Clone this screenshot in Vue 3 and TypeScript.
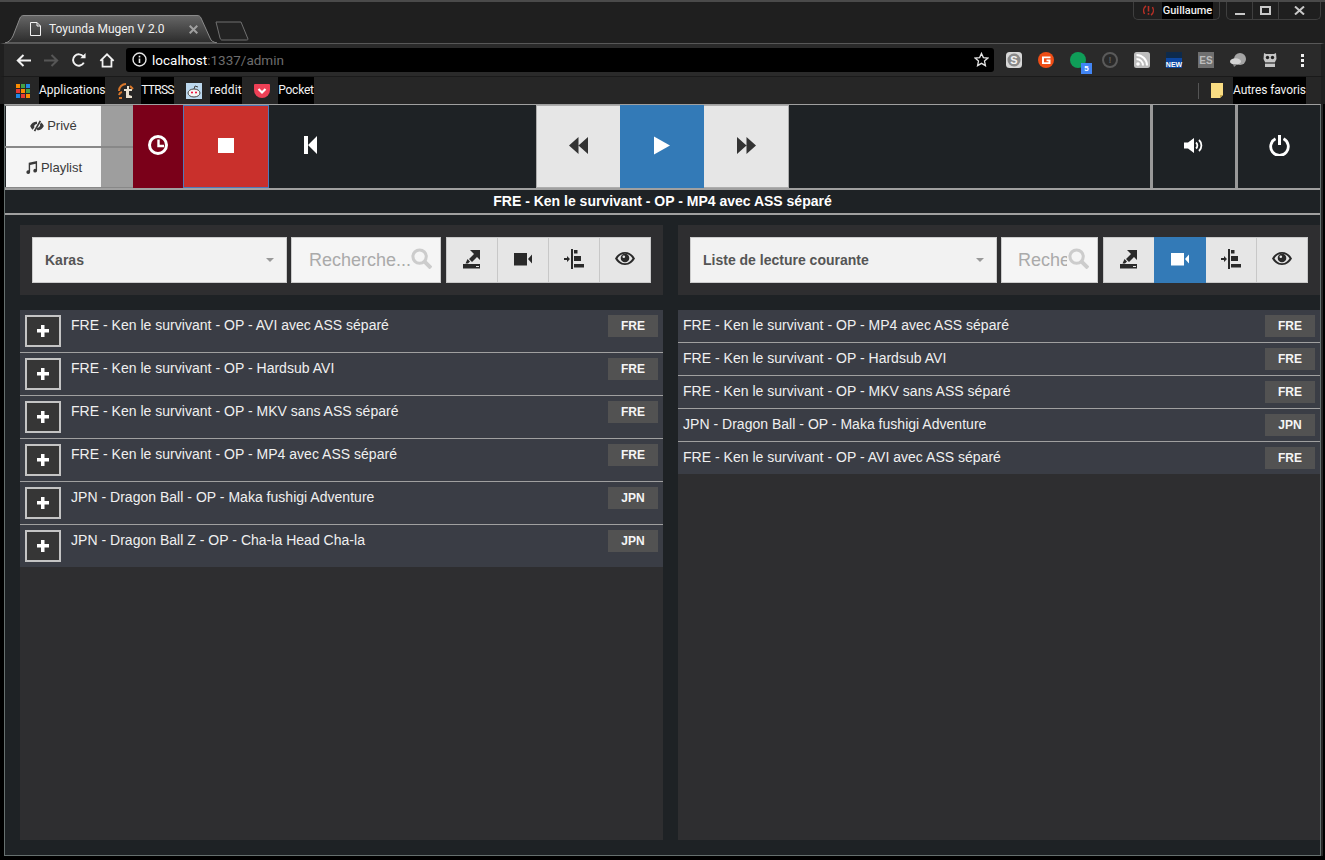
<script setup lang="ts">
const leftRows = [
  { t: 'FRE - Ken le survivant - OP - AVI avec ASS séparé', l: 'FRE' },
  { t: 'FRE - Ken le survivant - OP - Hardsub AVI', l: 'FRE' },
  { t: 'FRE - Ken le survivant - OP - MKV sans ASS séparé', l: 'FRE' },
  { t: 'FRE - Ken le survivant - OP - MP4 avec ASS séparé', l: 'FRE' },
  { t: 'JPN - Dragon Ball - OP - Maka fushigi Adventure', l: 'JPN' },
  { t: 'JPN - Dragon Ball Z - OP - Cha-la Head Cha-la', l: 'JPN' },
]
const rightRows = [
  { t: 'FRE - Ken le survivant - OP - MP4 avec ASS séparé', l: 'FRE' },
  { t: 'FRE - Ken le survivant - OP - Hardsub AVI', l: 'FRE' },
  { t: 'FRE - Ken le survivant - OP - MKV sans ASS séparé', l: 'FRE' },
  { t: 'JPN - Dragon Ball - OP - Maka fushigi Adventure', l: 'JPN' },
  { t: 'FRE - Ken le survivant - OP - AVI avec ASS séparé', l: 'FRE' },
]
const tools = ['i-export', 'i-video', 'i-align', 'i-eye']
const dots = ['#e53935', '#fb8c00', '#43a047', '#1e88e5']
</script>

<template>
  <div class="win">
    <svg class="sprite" aria-hidden="true">
      <symbol id="i-export" viewBox="0 0 20 20">
        <path d="M8 1h10v10l-3-3-5 5-3-3 5-5zM5.500 10l2.500 2.500L6 14.500H3.500zM1 15h17v4.500H1z" fill="currentColor" />
        <path d="M14 17h3v1h-3z" fill="#e6e6e6" />
      </symbol>
      <symbol id="i-video" viewBox="0 0 20 20">
        <path d="M1 4h13v12.500H1zM15 10l4-4.500v9z" fill="currentColor" />
      </symbol>
      <symbol id="i-align" viewBox="0 0 20 20">
        <path d="M7 0h2v20H7zM0 9h3V7l3 3-3 3v-2H0zM10 1h3.500v3.500H10zM10 7h7v5h-7zM10 15h10v3.500H10z" fill="currentColor" />
      </symbol>
      <symbol id="i-eye" viewBox="0 0 20 20">
        <path fill-rule="evenodd" d="M10 3c5 0 8 3 10 6.500-2 3.500-5 6.500-10 6.500S2 13 0 9.500C2 6 5 3 10 3zM2.500 9.500c1.500 2.500 4 4.800 7.500 4.800s6-2.300 7.500-4.800C16 7 13.500 4.700 10 4.700S4 7 2.500 9.500z" fill="currentColor" />
        <circle cx="10" cy="9" r="4.300" fill="currentColor" />
        <circle cx="8.800" cy="7.800" r="1.300" fill="#e6e6e6" />
      </symbol>
      <symbol id="i-search" viewBox="0 0 22 22">
        <circle cx="9" cy="9" r="7" fill="none" stroke="currentColor" stroke-width="3.200" />
        <path d="M14 14l7 7" stroke="currentColor" stroke-width="4.200" />
      </symbol>
    </svg>

    <div class="tabstrip">
      <div class="tab">
        <svg class="tabshape" viewBox="0 0 212 28" preserveAspectRatio="none">
          <defs>
            <linearGradient id="tg" x1="0" y1="0" x2="0" y2="1">
              <stop offset="0" stop-color="#666" />
              <stop offset="1" stop-color="#2b2b2b" />
            </linearGradient>
          </defs>
          <path d="M0 28C4 27 6 25 8 21L15 3C16 1 17 .5 19 .5H192C194 .5 195 1 196 3L205 23C206 26 208 27 212 28Z" fill="url(#tg)" stroke="#8a8a8a" />
        </svg>
        <svg class="favicon" viewBox="0 0 11 14">
          <path d="M.5.500h6.500l3.500 3.500v9.500H.5zM7 .5v3.500h3.500" fill="none" stroke="#f2f2f2" />
        </svg>
        <span class="tabtitle">Toyunda Mugen V 2.0</span>
        <svg class="tabx" width="9" height="9" viewBox="0 0 9 9"><path d="M.7.7l7.600 7.600M8.300.7L.7 8.300" stroke="#a0a0a0" stroke-width="2" /></svg>
      </div>
      <svg class="newtab" viewBox="0 0 36 20">
        <path d="M2 1H27L34 18C34 19 33 19 32 19H8C7 19 7 19 6 17Z" fill="#232323" stroke="#707070" />
      </svg>
      <div class="spacer"></div>
      <div class="userpill">
        <svg class="usericon" width="13" height="11" viewBox="0 0 13 11">
          <path d="M4 1C1.500 2.500 1 6 2.500 9M9 10c2.500-1.500 3-5 1.500-8" fill="none" stroke="#b93026" stroke-width="1.500" />
          <path d="M5.700 1h1.600v5.500H5.700zM5.700 8h1.600v1.700H5.700z" fill="#b93026" />
        </svg>
        <span class="username">Guillaume</span>
      </div>
      <div class="wincontrols">
        <span class="wc"><i class="wmin"></i></span>
        <span class="wc"><i class="wmax"></i></span>
        <span class="wc wide">
          <svg width="11" height="9" viewBox="0 0 11 9"><path d="M1 .5l9 8M10 .5l-9 8" stroke="#c8c8c8" stroke-width="2" /></svg>
        </span>
      </div>
    </div>

    <div class="toolbar">
      <svg class="nav" width="15" height="13" viewBox="0 0 15 13"><path d="M7.500 1L1.800 6.500 7.500 12M2 6.500h13" fill="none" stroke="#f2f2f2" stroke-width="2" /></svg>
      <svg class="nav" width="15" height="13" viewBox="0 0 15 13"><path d="M7.500 1l5.700 5.500L7.500 12M13 6.500H0" fill="none" stroke="#565656" stroke-width="2" /></svg>
      <svg class="nav" width="14" height="14" viewBox="0 0 16 16"><path d="M13.500 11A6.500 6.500 0 1 1 13 4.200" fill="none" stroke="#f2f2f2" stroke-width="2.200" /><path d="M9.500 6H15.500V0z" fill="#f2f2f2" /></svg>
      <svg class="nav navlast" width="16" height="15" viewBox="0 0 18 16"><path d="M1.500 8.500L9 1l7.500 7.500M4 7v8h10V7" fill="none" stroke="#f2f2f2" stroke-width="2" /></svg>
      <div class="omni">
        <svg width="15" height="15" viewBox="0 0 15 15"><circle cx="7.500" cy="7.500" r="6.500" fill="none" stroke="#e6e6e6" stroke-width="1.400" /><path d="M6.700 6.500h1.600v4.500H6.700zM6.700 3.800h1.600v1.600H6.700z" fill="#e6e6e6" /></svg>
        <span class="url"><b>localhost</b>:1337/admin</span>
        <span class="spacer"></span>
        <svg width="15" height="15" viewBox="0 0 16 16"><path d="M8 1.500l2 4.500 4.800.5-3.600 3.200 1 4.800L8 12.100l-4.200 2.400 1-4.800L1.200 6.500 6 6z" fill="none" stroke="#e6e6e6" stroke-width="1.400" /></svg>
      </div>
      <div class="exts">
        <svg class="ext" viewBox="0 0 16 16"><rect width="16" height="16" rx="3.500" fill="#d8d8d8" /><circle cx="8" cy="8" r="6.500" fill="#8a8a8a" /><text x="8" y="11.800" font-size="11" font-weight="700" text-anchor="middle" fill="#f4f4f4" font-family="Liberation Sans">S</text></svg>
        <svg class="ext" viewBox="0 0 16 16"><circle cx="8" cy="8" r="8" fill="#ef4e16" /><path d="M12.500 4.500H4v7.500h8.500V7.500H8.500v1.800h2v1H6V6.300h6.500z" fill="#fff" /></svg>
        <span class="ext e-dot"><i>5</i></span>
        <span class="ext e-info">!</span>
        <svg class="ext" viewBox="0 0 16 16"><rect width="16" height="16" rx="2.500" fill="#bdbdbd" /><circle cx="4" cy="12" r="1.800" fill="#fff" /><path d="M2.500 7a6.500 6.500 0 0 1 6.500 6.500M2.500 3a10.500 10.500 0 0 1 10.500 10.500" fill="none" stroke="#fff" stroke-width="2" /></svg>
        <span class="ext e-new">NEW</span>
        <span class="ext e-es">ES</span>
        <svg class="ext" viewBox="0 0 16 16"><circle cx="10" cy="7" r="6" fill="#a4a4a4" /><ellipse cx="5.500" cy="9.500" rx="5.500" ry="3.200" fill="#d4d4d4" /><path d="M3 12l1 3 3-2.500z" fill="#8a8a8a" /></svg>
        <svg class="ext" viewBox="0 0 16 16"><path d="M2 1l2 1h8l2-1 .5 6-1.500 3v5H3v-5L1.500 7z" fill="#c6c6c6" /><circle cx="5.500" cy="5.500" r="1.700" fill="#222" /><circle cx="10.500" cy="5.500" r="1.700" fill="#222" /><path d="M3 10h10v2H3z" fill="#666" /></svg>
      </div>
      <span class="kebab"><i></i><i></i><i></i></span>
    </div>

    <div class="bookmarks">
      <span class="apps"><i v-for="n in 9" :key="n" :style="{ background: dots[n % 4] }"></i></span>
      <span class="bm b-app">Applications</span>
      <svg class="bmicon" viewBox="0 0 16 16"><path d="M1 8a7 7 0 0 1 7-7M1 12a4 4 0 0 1 3-3" fill="none" stroke="#d9772a" stroke-width="2" /><path d="M9 3h2v3h3v2h-3v4l3 1v2H8V8H6V6h3z" fill="#e9e0d0" /><path d="M12 3l3 3M1 15h3" stroke="#d9772a" stroke-width="2" /></svg>
      <span class="bm b-tt">TTRSS</span>
      <svg class="bmicon" viewBox="0 0 16 16"><rect width="16" height="16" fill="#bcd8ee" /><ellipse cx="8" cy="10" rx="6" ry="4" fill="#f4f4f4" stroke="#444" /><circle cx="6" cy="9.500" r="1" fill="#e03" /><circle cx="10" cy="9.500" r="1" fill="#e03" /><path d="M8 6l1-3 3 1" fill="none" stroke="#444" /></svg>
      <span class="bm b-re">reddit</span>
      <svg class="bmicon" viewBox="0 0 16 16"><path d="M1 1h14a1 1 0 0 1 1 1v5a8 8 0 0 1-16 0V2a1 1 0 0 1 1-1z" fill="#ee4056" /><path d="M4.500 6L8 9.500 11.500 6" fill="none" stroke="#fff" stroke-width="2.200" /></svg>
      <span class="bm b-po">Pocket</span>
      <span class="spacer"></span>
      <span class="bmsep"></span>
      <svg class="folder" viewBox="0 0 12 15"><path d="M0 0h12v12l-3 3H0z" fill="#f9dc82" /><path d="M9 15v-3h3z" fill="#c9a94a" /></svg>
      <span class="bm b-au">Autres favoris</span>
    </div>

    <div class="app">
      <header class="top">
        <div class="modes">
          <div class="mode">
            <span class="modebtn">
              <svg width="14" height="12" viewBox="0 0 16 14">
                <path d="M3 7c1-2 3-3.500 5-3.500M13 7c-1 2-3 3.500-5 3.500" fill="none" stroke="currentColor" stroke-width="2.400" />
                <path d="M0 7c1.500-3 4-5 8-5.200L6 5a2.500 2.500 0 0 0-1 3.500l-2 3C1.500 10.500.7 8.500 0 7zM11 .5l1.800.9L6 13.500l-1.800-.9zM16 7c-1.500 3-4 5-7.500 5.200l1.500-2.700a3 3 0 0 0 1.300-4l1.500-2.500C14.200 4 15.300 5.500 16 7z" fill="currentColor" />
              </svg>
              Privé
            </span>
            <span class="modeside"></span>
          </div>
          <div class="mode">
            <span class="modebtn">
              <svg width="13" height="13" viewBox="0 0 14 14"><path d="M4 2l9-2v10.500a2 2 0 1 1-1.500-2V3L5.500 4.300V12a2 2 0 1 1-1.500-2z" fill="currentColor" /></svg>
              Playlist
            </span>
            <span class="modeside"></span>
          </div>
        </div>
        <button class="ctl clock">
          <svg width="20" height="20" viewBox="0 0 20 20"><circle cx="10" cy="10" r="8.500" fill="none" stroke="#fff" stroke-width="3" /><path d="M10.500 4.500v6.500H16" fill="none" stroke="#fff" stroke-width="2.400" /></svg>
        </button>
        <button class="ctl stop">
          <span class="square"></span>
        </button>
        <button class="ctl prev">
          <svg width="13" height="18" viewBox="0 0 13 18"><path d="M0 0h4v18H0zM4 9l9-9v18z" fill="#fff" /></svg>
        </button>
        <div class="transport">
          <button class="ctl tbtn">
            <svg width="19" height="17" viewBox="0 0 18 16"><path d="M0 8l9-8v16zM9 8l9-8v16z" fill="#333" /></svg>
          </button>
          <button class="ctl tbtn play">
            <svg width="16" height="19" viewBox="0 0 16 18"><path d="M0 0l16 9-16 9z" fill="#fff" /></svg>
          </button>
          <button class="ctl tbtn">
            <svg width="19" height="17" viewBox="0 0 18 16"><path d="M0 0l9 8-9 8zM9 0l9 8-9 8z" fill="#333" /></svg>
          </button>
        </div>
        <button class="ctl sysbtn">
          <svg width="20" height="15" viewBox="0 0 20 15"><path d="M0 4.500h4L10 0v15l-6-4.500H0z" fill="#fff" /><path d="M12 4.500a4 4 0 0 1 0 6M15 2a7.500 7.500 0 0 1 0 11" fill="none" stroke="#fff" stroke-width="1.800" /></svg>
        </button>
        <button class="ctl sysbtn">
          <svg width="21" height="21" viewBox="0 0 21 21"><path d="M6.500 3.800a8.800 8.800 0 1 0 8 0" fill="none" stroke="#fff" stroke-width="2.800" /><path d="M9 0h3v10H9z" fill="#fff" /></svg>
        </button>
      </header>
      <div class="nowplaying">FRE - Ken le survivant - OP - MP4 avec ASS séparé</div>

      <main class="panels">
        <section class="panel">
          <div class="head">
            <div class="select sel-l">Karas<i class="caret"></i></div>
            <div class="search s-l">
              <span class="ph">Recherche...</span>
              <svg class="lens" width="21" height="21"><use href="#i-search" /></svg>
            </div>
            <div class="tools">
              <span v-for="ic in tools" :key="ic" class="tool">
                <svg width="20" height="20"><use :href="'#' + ic" /></svg>
              </span>
            </div>
          </div>
          <ul class="list">
            <li v-for="r in leftRows" :key="r.t" class="row tall">
              <span class="add"><i></i></span>
              <span class="title">{{ r.t }}</span>
              <span class="tag">{{ r.l }}</span>
            </li>
          </ul>
        </section>
        <section class="panel">
          <div class="head">
            <div class="select sel-r">Liste de lecture courante<i class="caret"></i></div>
            <div class="search s-r">
              <span class="ph">Recherche...</span>
              <svg class="lens" width="21" height="21"><use href="#i-search" /></svg>
            </div>
            <div class="tools">
              <span v-for="ic in tools" :key="ic" class="tool" :class="{ on: ic === 'i-video' }">
                <svg width="20" height="20"><use :href="'#' + ic" /></svg>
              </span>
            </div>
          </div>
          <ul class="list">
            <li v-for="r in rightRows" :key="r.t" class="row">
              <span class="title plain">{{ r.t }}</span>
              <span class="tag">{{ r.l }}</span>
            </li>
          </ul>
        </section>
      </main>
    </div>
  </div>
</template>

<style>
html, body { margin: 0; background: #000; overflow: hidden; }
</style>

<style scoped>
.win {
  width: 1325px;
  height: 860px;
  display: flex;
  flex-direction: column;
  background: #000;
  font-family: "Liberation Sans", Arial, sans-serif;
  color: #fff;
  overflow: hidden;
  box-sizing: border-box;
}
.sprite { position: absolute; width: 0; height: 0; }
.spacer { flex: 1; }

.tabstrip {
  height: 43px;
  box-sizing: border-box;
  border-top: 2px solid #4a4a4a;
  display: flex;
  align-items: flex-end;
  padding-left: 5px;
  padding-right: 4px;
  background: #1f1f1f;
  flex: none;
}
.tab {
  position: relative;
  width: 212px;
  height: 28px;
  display: flex;
  align-items: center;
  flex: none;
}
.tabshape { position: absolute; inset: 0; width: 100%; height: 100%; }
.favicon { position: relative; margin-left: 25px; width: 11px; height: 14px; flex: none; }
.tabtitle {
  position: relative;
  margin-left: 8px;
  font-family: Roboto, sans-serif;
  font-size: 12px;
  color: #f0f0f0;
  white-space: nowrap;
}
.tabx { position: relative; margin-left: 24px; flex: none; }
.newtab { width: 36px; height: 20px; margin: 0 0 2px -3px; flex: none; }
.userpill {
  align-self: flex-start;
  width: 87px;
  height: 18px;
  box-sizing: border-box;
  border: 1px solid #3f3f3f;
  border-top: 0;
  border-radius: 0 0 5px 5px;
  display: flex;
  align-items: center;
  margin-right: 6px;
}
.usericon { margin: 0 7px 0 8px; flex: none; }
.username {
  background: #000;
  font-family: Roboto, sans-serif;
  font-size: 11px;
  font-weight: 500;
  width: 51px;
  line-height: 17px;
  text-align: center;
  color: #eee;
  white-space: nowrap;
}
.wincontrols {
  align-self: flex-start;
  display: flex;
  height: 18px;
  border: 1px solid #3f3f3f;
  border-top: 0;
  border-radius: 0 0 5px 5px;
  box-sizing: border-box;
}
.wc {
  width: 25px;
  display: flex;
  align-items: center;
  justify-content: center;
  border-right: 1px solid #3f3f3f;
}
.wc.wide { width: 41px; border-right: 0; }
.wmin { width: 10px; height: 2px; background: #c8c8c8; margin-top: 6px; }
.wmax { width: 7px; height: 5px; border: 2px solid #c8c8c8; }

.toolbar {
  height: 33px;
  flex: none;
  box-sizing: border-box;
  border-top: 1px solid #585858;
  border-left: 4px solid #1f1f1f;
  border-right: 4px solid #1f1f1f;
  background: #2a2a2a;
  display: flex;
  align-items: center;
  padding-left: 12px;
}
.nav { margin-right: 13px; flex: none; }
.navlast { margin-right: 11px; }
.omni {
  width: 868px;
  height: 24px;
  flex: none;
  background: #000;
  border-radius: 3px;
  display: flex;
  align-items: center;
  padding: 0 5px 0 6px;
  box-sizing: border-box;
  margin-top: -1px;
}
.url { margin-left: 5px; font-family: Roboto, sans-serif; font-size: 13.500px; color: #6d6d6d; }
.url b { font-weight: 400; color: #fff; }
.exts { display: flex; align-items: center; gap: 16px; margin-left: 12px; }
.ext {
  width: 16px;
  height: 16px;
  flex: none;
  display: flex;
  align-items: center;
  justify-content: center;
  box-sizing: border-box;
  font-size: 11px;
  font-weight: 700;
}
.e-dot { background: #0f9d58; border-radius: 50%; position: relative; }
.e-dot i {
  position: absolute;
  right: -6px;
  bottom: -6px;
  width: 11px;
  height: 11px;
  background: #4285f4;
  font-size: 8px;
  font-style: normal;
  text-align: center;
  line-height: 11px;
}
.e-info { border: 2px solid #5a5a5a; border-radius: 50%; color: #5a5a5a; font-size: 9px; }
.e-new { background: linear-gradient(#0e2a4a 40%, #0d47a1 40%); font-size: 7px; align-items: flex-end; }
.e-es { background: #6f6f6f; color: #bdbdbd; font-size: 10px; }
.kebab { display: flex; flex-direction: column; gap: 2px; margin-left: 23px; }
.kebab i { width: 3px; height: 3px; background: #f0f0f0; }

.bookmarks {
  height: 28px;
  flex: none;
  border-left: 4px solid #1f1f1f;
  border-right: 4px solid #1f1f1f;
  background: #262626;
  border-top: 1px solid #1a1a1a;
  box-sizing: border-box;
  display: flex;
  align-items: stretch;
  padding-left: 12px;
  padding-right: 15px;
}
.apps {
  width: 14px;
  height: 14px;
  display: grid;
  grid-template-columns: repeat(3, 4px);
  gap: 1px;
  align-self: center;
  margin-right: 9px;
}
.apps i { width: 4px; height: 4px; }
.bm {
  background: #000;
  font-family: Roboto, sans-serif;
  font-size: 12px;
  line-height: 27px;
  color: #f2f2f2;
  white-space: nowrap;
  text-align: center;
  flex: none;
}
.b-app { width: 66px; }
.b-tt { width: 33px; letter-spacing: -.7px; }
.b-re { width: 32px; letter-spacing: .2px; }
.b-po { width: 36px; letter-spacing: -.2px; }
.b-au { width: 73px; letter-spacing: -.1px; }
.bmicon { width: 16px; height: 16px; align-self: center; margin: 0 8px 0 12px; flex: none; }
.b-app + .bmicon { margin: 0 7px 0 13px; }
.bmsep { width: 1px; height: 16px; background: #555; align-self: center; flex: none; }
.folder { width: 12px; height: 15px; margin: 0 10px 0 12px; align-self: center; flex: none; }

.app {
  flex: 1;
  min-height: 0;
  margin: 0 4px 4px;
  background: #1e2225;
  display: flex;
  flex-direction: column;
  border: 1px solid #66706f;
  border-top-color: #a0a0a0;
  box-shadow: 2px 0 0 #262626;
}
.top {
  height: 83px;
  flex: none;
  display: flex;
}
.modes { width: 128px; flex: none; display: flex; flex-direction: column; }
.mode { flex: 1; display: flex; border-bottom: 1px solid #888; }
.mode:first-child { border-bottom-width: 2px; border-top: 1px solid #888; }
.modebtn {
  width: 95px;
  margin-left: 1px;
  background: #f5f5f5;
  color: #3a3a3a;
  font-size: 13px;
  display: flex;
  align-items: center;
  justify-content: center;
  gap: 3px;
  box-sizing: border-box;
}
.modeside { flex: 1; background: #9e9e9e; }
.ctl {
  border: 0;
  padding: 0 0 3px;
  margin: 0;
  display: flex;
  align-items: center;
  justify-content: center;
  flex: none;
  font: inherit;
  box-sizing: border-box;
}
.clock { width: 50px; background: #7a0019; }
.stop {
  width: 86px;
  background: #c9302c;
  border: 1px solid #4f79b9;
}
.square { width: 16px; height: 15px; background: #fff; }
.prev { width: 84px; background: transparent; padding-right: 2px; }
.transport { display: flex; margin-left: 183px; flex: none; }
.tbtn { width: 84px; background: #e6e6e6; border: 1px solid #adadad; border-width: 1px 0; }
.tbtn:last-child { width: 85px; border-right: 1px solid #adadad; }
.tbtn:first-child { border-left: 1px solid #adadad; }
.tbtn.play { background: #337ab7; border: 0; }
.sysbtn {
  width: 85px;
  background: transparent;
  border-left: 3px solid #999;
}
.transport + .sysbtn { margin-left: 361px; }

.nowplaying {
  height: 27px;
  flex: none;
  box-sizing: border-box;
  border-top: 2px solid #a0a0a0;
  border-bottom: 2px solid #a0a0a0;
  text-align: center;
  font-size: 14px;
  font-weight: 700;
  line-height: 23px;
  color: #fff;
}
.panels {
  flex: 1;
  min-height: 0;
  display: grid;
  grid-template-columns: 643px 642px;
  column-gap: 15px;
  padding: 10px 0 15px 15px;
}
.panel { display: flex; flex-direction: column; min-height: 0; min-width: 0; }
.head {
  height: 70px;
  flex: none;
  background: #2e2e30;
  display: flex;
  align-items: flex-start;
  padding: 12px 12px 0;
  box-sizing: border-box;
  gap: 4px;
}
.select {
  box-sizing: border-box;
  height: 46px;
  background: #f2f2f2;
  border: 1px solid #ccc;
  color: #555;
  font-size: 14px;
  font-weight: 700;
  line-height: 44px;
  padding-left: 12px;
  position: relative;
  flex: none;
}
.sel-l { width: 255px; }
.sel-r { width: 307px; }
.caret {
  position: absolute;
  right: 12px;
  top: 20px;
  border: 4px solid transparent;
  border-top-color: #999;
  border-bottom: 0;
}
.search {
  box-sizing: border-box;
  height: 46px;
  background: #f5f5f5;
  border: 1px solid #ccc;
  position: relative;
  overflow: hidden;
  flex: none;
  display: flex;
  align-items: center;
  font-size: 18px;
  color: #aaa;
  white-space: nowrap;
}
.s-l { width: 150px; padding-left: 17px; }
.s-r { width: 97px; padding-left: 16px; }
.ph { display: block; overflow: hidden; flex: 1; }
.s-r .ph { max-width: 49px; flex: none; }
.lens { position: absolute; right: 8px; top: 10px; color: #ccc; }
.tools {
  display: flex;
  margin-left: 1px;
  flex: none;
}
.tool {
  width: 51px;
  height: 46px;
  box-sizing: border-box;
  background: #e6e6e6;
  border: 1px solid #c8c8c8;
  border-left: 0;
  color: #2a2a2a;
  display: flex;
  align-items: center;
  justify-content: center;
  padding-bottom: 3px;
}
.tool:first-child { border-left: 1px solid #c8c8c8; width: 52px; }
.tool.on { background: #337ab7; border-color: #337ab7; color: #fff; margin-left: -1px; width: 52px; }
.list {
  margin: 15px 0 0;
  padding: 0;
  list-style: none;
  flex: 1;
  min-height: 0;
  background: #2e2e30;
}
.row {
  display: flex;
  align-items: flex-start;
  background: #3a3d45;
  height: 33px;
  box-sizing: border-box;
  border-bottom: 1px solid #a0a0a0;
  padding: 5px 5px 0;
  font-size: 14px;
}
.row:last-child { border-bottom: 0; height: 32px; }
.row.tall { height: 43px; }
.row.tall:last-child { height: 42px; }
.add {
  width: 36px;
  height: 32px;
  box-sizing: border-box;
  border: 2px solid #c4c4c4;
  background: #363636;
  display: flex;
  align-items: center;
  justify-content: center;
  flex: none;
}
.add i {
  width: 12px;
  height: 12px;
  background:
    linear-gradient(#fff, #fff) center / 12px 3.500px no-repeat,
    linear-gradient(#fff, #fff) center / 3.500px 12px no-repeat;
}
.title { flex: 1; margin-left: 10px; line-height: 20px; color: #f0f0f0; white-space: nowrap; letter-spacing: .02px; }
.title.plain { margin-left: 0; }
.tag {
  width: 50px;
  height: 22px;
  flex: none;
  background: #525252;
  font-size: 12px;
  font-weight: 700;
  line-height: 22px;
  text-align: center;
  color: #f5f5f5;
}
</style>
